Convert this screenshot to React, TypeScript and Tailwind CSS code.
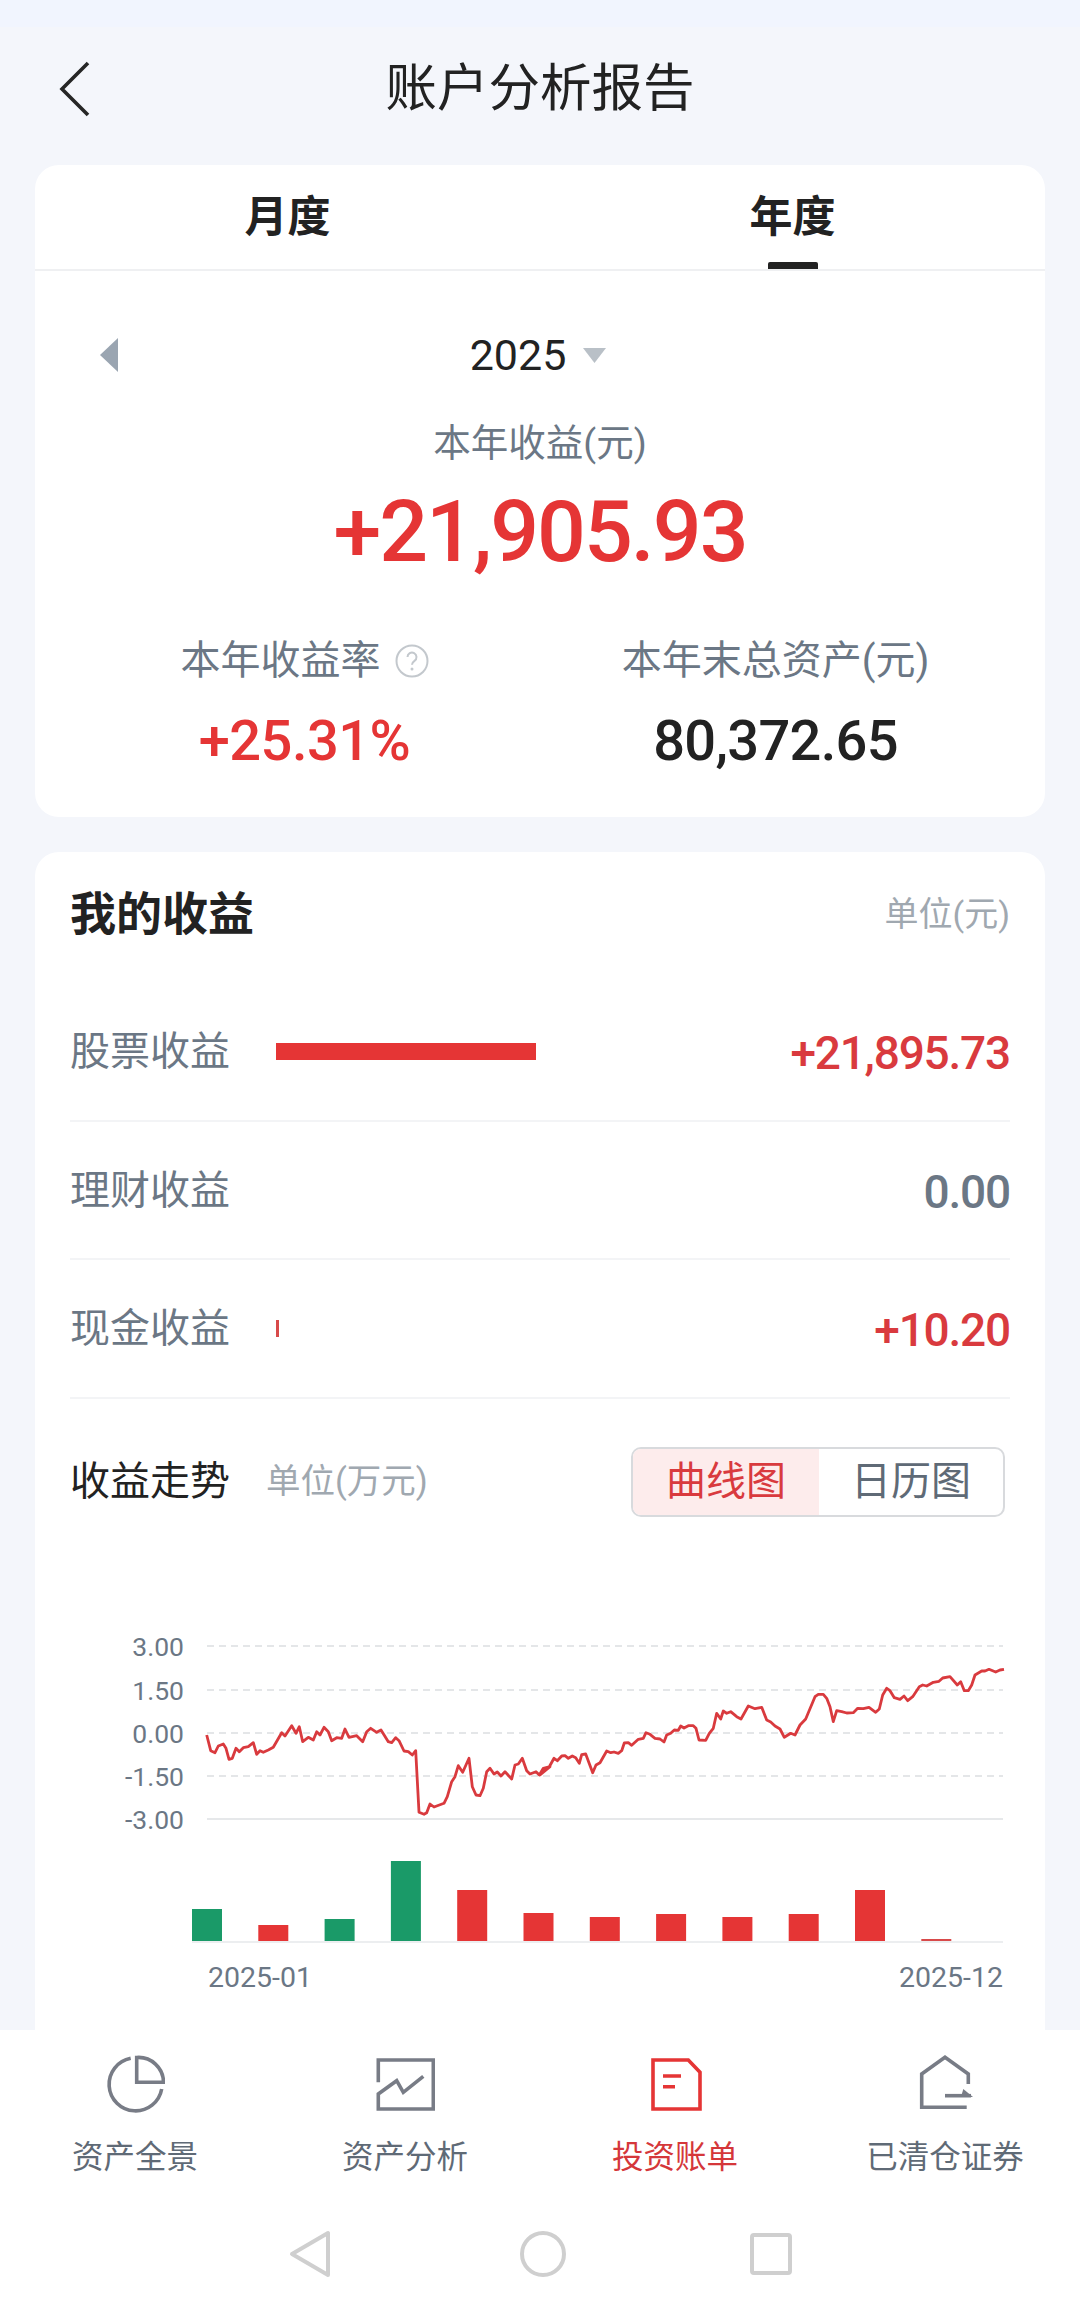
const linePts: [number, number][] = [
  [320,345],[332,392],[345,398],[355,378],[370,372],[378,385],[387,418],[397,415],[408,385],[418,395],[430,383],[445,380],[460,368],[470,403],[480,392],[490,397],[505,390],[520,382],[545,338],[555,348],[575,317],[588,340],[598,320],[608,365],[625,352],[640,360],[650,335],[660,345],[672,322],[685,335],[695,362],[710,353],[725,355],[735,327],[747,352],[770,347],[788,365],[800,335],[812,325],[830,337],[843,330],[865,365],[875,368],[887,353],[897,362],[912,393],[925,395],[937,405],[947,392],[957,577],[972,583],[980,578],[990,552],[1002,561],[1032,550],[1042,530],[1055,485],[1065,470],[1075,437],[1088,457],[1107,415],[1117,500],[1128,525],[1140,527],[1150,505],[1160,455],[1170,445],[1182,462],[1192,456],[1203,468],[1215,455],[1235,477],[1245,435],[1255,432],[1267,415],[1280,452],[1290,462],[1308,455],[1318,465],[1330,445],[1350,440],
];
const linePts2: [number, number][] = [
  [0,465],[10,447],[28,440],[42,415],[52,422],[65,408],[75,407],[85,415],[97,408],[107,413],[118,430],[125,404],[137,402],[158,458],[168,435],[180,428],[200,393],[212,398],[222,396],[235,400],[245,392],[253,369],[265,368],[275,376],[295,358],[310,355],[318,338],[330,343],[345,355],[360,357],[372,366],[380,345],[392,340],[403,330],[415,331],[422,318],[432,324],[445,317],[460,317],[468,325],[477,360],[497,361],[508,340],[520,325],[530,280],[542,297],[550,273],[560,280],[572,275],[590,290],[603,297],[625,258],[645,266],[665,262],[680,300],[692,306],[705,318],[720,327],[733,352],[752,340],[765,345],[780,315],[797,297],[825,230],[835,223],[850,223],[860,235],[870,260],[880,305],[890,272],[905,275],[920,279],[940,278],[953,265],[970,266],[987,262],[1007,277],[1018,267],[1028,225],[1040,205],[1050,212],[1063,233],[1080,238],[1092,228],[1103,242],[1118,230],[1138,200],[1148,195],[1160,198],[1180,187],[1197,184],[1208,174],[1230,170],[1252,195],[1262,185],[1273,212],[1285,212],[1295,195],[1305,165],[1325,153],[1335,153],[1347,148],[1367,156],[1380,150],[1392,148],
];

// chart svg starts at page x 59
const linePath = [
  ...linePts.map(([x, y]) => [x / 3 + 41, y / 3]),
  ...linePts2.map(([x, y]) => [x / 3 + 481, y / 3]),
]
  .map(([x, y]) => `${x.toFixed(1)},${y.toFixed(1)}`)
  .join(" ");

const bars = [
  { top: 289, color: "#1a9a68" },
  { top: 305, color: "#e53535" },
  { top: 299, color: "#1a9a68" },
  { top: 241, color: "#1a9a68" },
  { top: 270, color: "#e53535" },
  { top: 293, color: "#e53535" },
  { top: 297, color: "#e53535" },
  { top: 294, color: "#e53535" },
  { top: 297, color: "#e53535" },
  { top: 294, color: "#e53535" },
  { top: 270, color: "#e53535" },
  { top: 319, color: "#d84a4a" },
];

function Chart() {
  const yLabels = ["3.00", "1.50", "0.00", "-1.50", "-3.00"];
  const gridY = [26, 70, 113, 156, 199];
  return (
    <svg width="960" height="380" className="mt-[103px] ml-[-11px] block">
      {gridY.map((y, i) => (
        <g key={y}>
          <line
            x1="148"
            x2="944"
            y1={y}
            y2={y}
            stroke={i === 4 ? "#e6e8ea" : "#e4e6e8"}
            strokeWidth="2"
            strokeDasharray={i === 4 ? undefined : "7 5"}
          />
          <text x="125" y={y + 10} textAnchor="end" fontSize="26.5" fill="#6b7785">
            {yLabels[i]}
          </text>
        </g>
      ))}
      <polyline points={linePath} fill="none" stroke="#d93a3e" strokeWidth="2.8" strokeLinejoin="round" />
      <line x1="133" x2="944" y1="322" y2="322" stroke="#eceef0" strokeWidth="2" />
      {bars.map((b, i) => (
        <rect key={i} x={133 + i * 66.3} y={b.top} width="30" height={321 - b.top} fill={b.color} />
      ))}
      <text x="149" y="367" fontSize="28.5" fill="#6b7785">2025-01</text>
      <text x="944" y="367" fontSize="28.5" textAnchor="end" fill="#6b7785">2025-12</text>
    </svg>
  );
}

function IncomeRow({ label, value, color, bar }: { label: string; value: string; color: string; bar?: string }) {
  return (
    <div className="flex h-[138.5px] items-center border-b-2 border-[#f3f4f6]">
      <span className="mt-[2px] w-[206px] text-[40px] leading-none text-[#6b7785]">{label}</span>
      {bar === "long" && <div className="h-[17px] w-[260px] bg-[#e53535]" />}
      {bar === "short" && <div className="h-[17px] w-[3px] bg-[#d84a4a]" />}
      <span className={`mt-[4px] ml-auto text-[46px] leading-none font-medium tracking-[-1.2px] ${color}`}>{value}</span>
    </div>
  );
}

function NavItem({ label, active, children }: { label: string; active?: boolean; children: React.ReactNode }) {
  return (
    <div className="flex flex-col items-center">
      <div className="flex h-[58px] items-center justify-center">{children}</div>
      <span className={`mt-[26px] text-[31.5px] leading-[36px] ${active ? "text-[#d5373a]" : "text-[#5f6a76]"}`}>
        {label}
      </span>
    </div>
  );
}

export default function App() {
  return (
    <div className="flex h-[2313px] w-[1080px] flex-col overflow-hidden bg-[#f4f6fb] font-['Roboto','Noto_Sans_CJK_SC',sans-serif]">
      <div className="h-[27px] shrink-0 bg-[#f1f5fe]" />

      <header className="relative flex h-[138px] shrink-0 items-center justify-center">
        <svg width="34" height="58" viewBox="0 0 34 58" className="absolute top-[33px] left-[58px]">
          <path d="M30 3 L4 29 L30 55" fill="none" stroke="#262626" strokeWidth="3.6" />
        </svg>
        <h1 className="mt-[-15px] text-[51.5px] leading-none font-normal text-[#222]">账户分析报告</h1>
      </header>

      <main className="flex-1 overflow-hidden px-[35px]">
        <section className="h-[652px] rounded-[24px] bg-white">
          <div className="grid h-[106px] grid-cols-2 border-b-2 border-[#eff0f2]">
            <div className="flex justify-center pt-[30px] text-[43px] leading-[44px] font-bold text-[#222]">月度</div>
            <div className="relative flex justify-center pt-[30px] text-[43px] leading-[44px] font-bold text-[#222]">
              年度
              <div className="absolute bottom-0 left-[228px] h-[7px] w-[50px] rounded-t-[2px] bg-[#222]" />
            </div>
          </div>

          <div className="relative mt-[64px] flex h-[40px] items-center justify-center">
            <svg width="18" height="34" viewBox="0 0 18 34" className="absolute top-[3px] left-[65px]">
              <path d="M18 0 V34 L0 17 Z" fill="#9aa5b1" />
            </svg>
            <span className="ml-[-4px] text-[43px] leading-none text-[#222]">2025</span>
            <svg width="23" height="15" viewBox="0 0 23 15" className="ml-[17px]">
              <path d="M0 0 H23 L11.5 15 Z" fill="#b9c0c7" />
            </svg>
          </div>

          <p className="mt-[48px] text-center text-[37.5px] leading-[40px] text-[#6b7785]">本年收益(元)</p>
          <p className="mt-[29px] text-center text-[86px] leading-[80px] font-medium tracking-[-2px] text-[#e53535]">
            +21,905.93
          </p>

          <div className="mt-[67px] flex">
            <div className="w-[505px] pl-[34px] text-center">
              <div className="flex items-center justify-center gap-[14px] text-[40px] leading-[44px] text-[#6b7785]">
                本年收益率
                <svg width="34" height="34" viewBox="0 0 34 34">
                  <circle cx="17" cy="17" r="15.5" fill="none" stroke="#c3c8cd" strokeWidth="2" />
                  <path d="M12.5 13 a4.5 4.5 0 1 1 7 3.8 c-1.8 1.2-2.5 2-2.5 4" fill="none" stroke="#c3c8cd" strokeWidth="2" />
                  <circle cx="17" cy="25" r="1.5" fill="#c3c8cd" />
                </svg>
              </div>
              <p className="mt-[30px] text-[56px] leading-[56px] font-medium tracking-[-0.5px] text-[#e53535]">+25.31%</p>
            </div>
            <div className="w-[505px] text-center">
              <div className="ml-[-34px] text-[40px] leading-[44px] text-[#6b7785]">本年末总资产(元)</div>
              <p className="mt-[30px] ml-[-34px] text-[56px] leading-[56px] font-medium tracking-[-0.7px] text-[#222]">
                80,372.65
              </p>
            </div>
          </div>
        </section>

        <section className="mt-[35px] h-[1200px] rounded-[24px] bg-white px-[35px]">
          <div className="flex items-center justify-between pt-[37px]">
            <h2 className="text-[46px] leading-[50px] font-bold text-[#222]">我的收益</h2>
            <span className="text-[34px] leading-none text-[#a0a8b0]">单位(元)</span>
          </div>

          <div className="mt-[44px]">
            <IncomeRow label="股票收益" value="+21,895.73" color="text-[#d93a3e]" bar="long" />
            <IncomeRow label="理财收益" value="0.00" color="text-[#6b7785]" />
            <IncomeRow label="现金收益" value="+10.20" color="text-[#d93a3e]" bar="short" />
          </div>

          <div className="mt-[48px] flex items-center">
            <span className="text-[40px] leading-none text-[#222]">收益走势</span>
            <span className="ml-[36px] text-[34.5px] leading-none text-[#a0a8b0]">单位(万元)</span>
            <div className="mr-[5px] ml-auto flex h-[70px] w-[374px] overflow-hidden rounded-[10px] border-2 border-[#d8dadd] text-[40px] leading-none">
              <div className="flex w-[186px] items-center justify-center bg-[#fdecec] text-[#d93a3e]">曲线图</div>
              <div className="flex flex-1 items-center justify-center text-[#5f6a76]">日历图</div>
            </div>
          </div>

          <Chart />
        </section>
      </main>

      <nav className="relative z-10 h-[283px] shrink-0 bg-white">
        <div className="grid grid-cols-4 pt-[26px]">
          <NavItem label="资产全景">
            <svg width="60" height="60" viewBox="0 0 60 60" fill="none" stroke="#787c86" strokeWidth="3.6">
              <path d="M25.7 3.3 A26.5 26.5 0 1 0 56.7 34" />
              <path d="M31.7 2.5 A25 25 0 0 1 58.5 27.3 H31.7 Z" />
            </svg>
          </NavItem>
          <NavItem label="资产分析">
            <svg width="60" height="60" viewBox="0 0 60 60" fill="none" stroke="#787c86" strokeWidth="3.6">
              <path d="M3.3 27.3 V5 H58.3 V54 H3.3 V39 L21.7 25.7 L28.3 37.3 L48.3 21.3" />
            </svg>
          </NavItem>
          <NavItem label="投资账单" active>
            <svg width="60" height="60" viewBox="0 0 60 60" fill="none" stroke="#e53535" strokeWidth="3.6">
              <path d="M8 5 H43.3 L55 17.3 V54 H8 Z" />
              <path d="M18 21 H36 M18 31.7 H30" />
            </svg>
          </NavItem>
          <NavItem label="已清仓证券">
            <svg width="60" height="60" viewBox="0 0 60 60" fill="none" stroke="#787c86" strokeWidth="3.6">
              <path d="M53.3 29 V19 L30 2.3 L6.7 19 V52.3 H51.7" />
              <path d="M30 40.7 H56" />
              <path d="M48.3 34 L58 42 H46 Z" fill="#787c86" stroke="none" />
            </svg>
          </NavItem>
        </div>
        <div className="mt-[54px] flex items-center justify-center">
          <svg width="42" height="48" viewBox="0 0 42 48" fill="none" stroke="#cfcfcf" strokeWidth="4" strokeLinejoin="round">
            <path d="M39 3 V45 L3 24 Z" />
          </svg>
          <svg width="46" height="46" viewBox="0 0 46 46" fill="none" stroke="#cfcfcf" strokeWidth="4" className="ml-[189px]">
            <circle cx="23" cy="23" r="21" />
          </svg>
          <svg width="42" height="42" viewBox="0 0 42 42" fill="none" stroke="#cfcfcf" strokeWidth="4" className="ml-[184px]">
            <rect x="2" y="2" width="38" height="38" rx="2" />
          </svg>
        </div>
      </nav>
    </div>
  );
}
